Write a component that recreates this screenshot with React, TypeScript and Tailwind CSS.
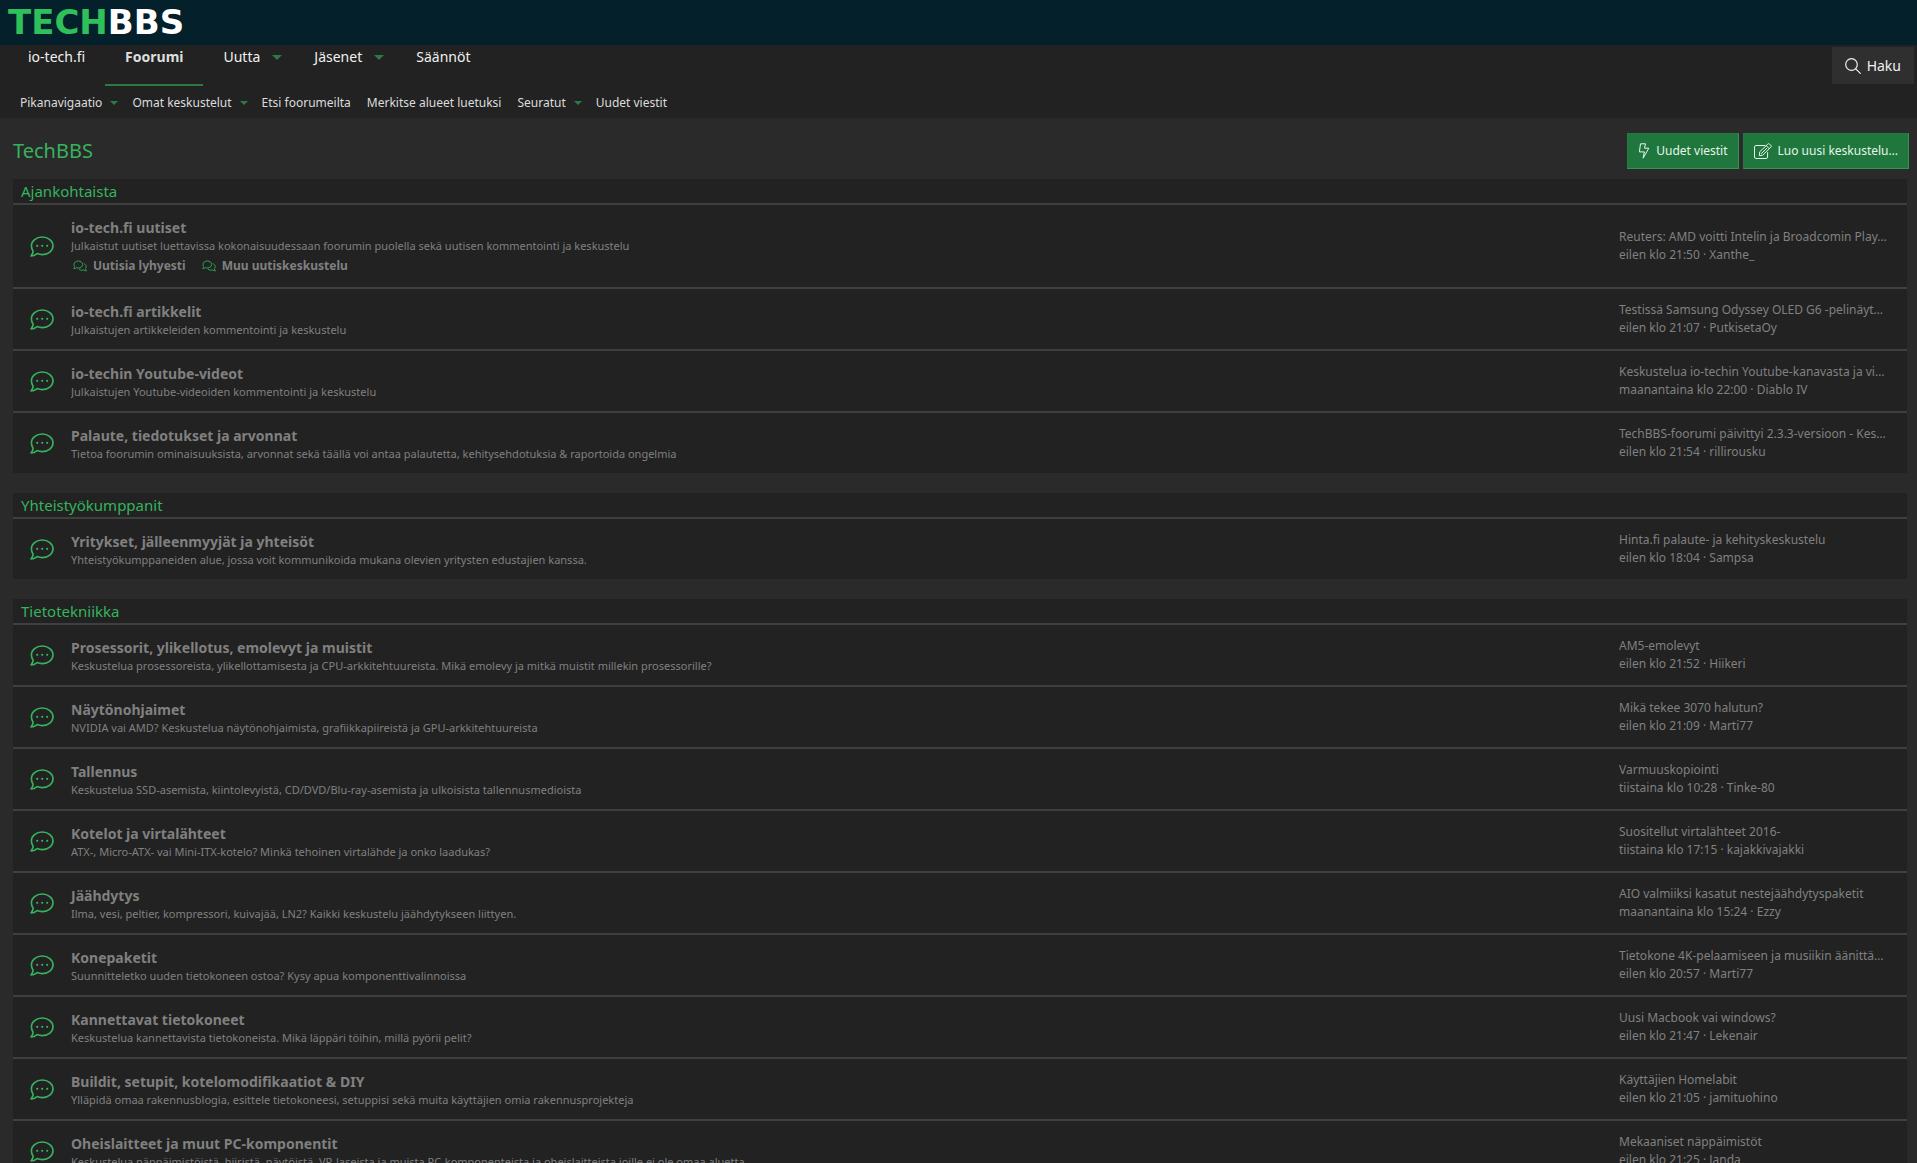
// ── Data ───────────────────────────────────────────────────────────────────

type Forum = {
  title: string;
  description: string;
  children?: string[];
  thread: string;
  time: string;
  user: string;
};

type Category = { title: string; forums: Forum[] };

const mainNav = [
  { label: "io-tech.fi" },
  { label: "Foorumi", active: true },
  { label: "Uutta", menu: true },
  { label: "Jäsenet", menu: true },
  { label: "Säännöt" },
];

const subNav = [
  { label: "Pikanavigaatio", menu: true },
  { label: "Omat keskustelut", menu: true },
  { label: "Etsi foorumeilta" },
  { label: "Merkitse alueet luetuksi" },
  { label: "Seuratut", menu: true },
  { label: "Uudet viestit" },
];

const categories: Category[] = [
  {
    title: "Ajankohtaista",
    forums: [
      {
        title: "io-tech.fi uutiset",
        description:
          "Julkaistut uutiset luettavissa kokonaisuudessaan foorumin puolella sekä uutisen kommentointi ja keskustelu",
        children: ["Uutisia lyhyesti", "Muu uutiskeskustelu"],
        thread: "Reuters: AMD voitti Intelin ja Broadcomin Play…",
        time: "eilen klo 21:50",
        user: "Xanthe_",
      },
      {
        title: "io-tech.fi artikkelit",
        description: "Julkaistujen artikkeleiden kommentointi ja keskustelu",
        thread: "Testissä Samsung Odyssey OLED G6 -pelinäyt…",
        time: "eilen klo 21:07",
        user: "PutkisetaOy",
      },
      {
        title: "io-techin Youtube-videot",
        description: "Julkaistujen Youtube-videoiden kommentointi ja keskustelu",
        thread: "Keskustelua io-techin Youtube-kanavasta ja vi…",
        time: "maanantaina klo 22:00",
        user: "Diablo IV",
      },
      {
        title: "Palaute, tiedotukset ja arvonnat",
        description:
          "Tietoa foorumin ominaisuuksista, arvonnat sekä täällä voi antaa palautetta, kehitysehdotuksia & raportoida ongelmia",
        thread: "TechBBS-foorumi päivittyi 2.3.3-versioon - Kes…",
        time: "eilen klo 21:54",
        user: "rillirousku",
      },
    ],
  },
  {
    title: "Yhteistyökumppanit",
    forums: [
      {
        title: "Yritykset, jälleenmyyjät ja yhteisöt",
        description:
          "Yhteistyökumppaneiden alue, jossa voit kommunikoida mukana olevien yritysten edustajien kanssa.",
        thread: "Hinta.fi palaute- ja kehityskeskustelu",
        time: "eilen klo 18:04",
        user: "Sampsa",
      },
    ],
  },
  {
    title: "Tietotekniikka",
    forums: [
      {
        title: "Prosessorit, ylikellotus, emolevyt ja muistit",
        description:
          "Keskustelua prosessoreista, ylikellottamisesta ja CPU-arkkitehtuureista. Mikä emolevy ja mitkä muistit millekin prosessorille?",
        thread: "AM5-emolevyt",
        time: "eilen klo 21:52",
        user: "Hiikeri",
      },
      {
        title: "Näytönohjaimet",
        description:
          "NVIDIA vai AMD? Keskustelua näytönohjaimista, grafiikkapiireistä ja GPU-arkkitehtuureista",
        thread: "Mikä tekee 3070 halutun?",
        time: "eilen klo 21:09",
        user: "Marti77",
      },
      {
        title: "Tallennus",
        description:
          "Keskustelua SSD-asemista, kiintolevyistä, CD/DVD/Blu-ray-asemista ja ulkoisista tallennusmedioista",
        thread: "Varmuuskopiointi",
        time: "tiistaina klo 10:28",
        user: "Tinke-80",
      },
      {
        title: "Kotelot ja virtalähteet",
        description:
          "ATX-, Micro-ATX- vai Mini-ITX-kotelo? Minkä tehoinen virtalähde ja onko laadukas?",
        thread: "Suositellut virtalähteet 2016-",
        time: "tiistaina klo 17:15",
        user: "kajakkivajakki",
      },
      {
        title: "Jäähdytys",
        description:
          "Ilma, vesi, peltier, kompressori, kuivajää, LN2? Kaikki keskustelu jäähdytykseen liittyen.",
        thread: "AIO valmiiksi kasatut nestejäähdytyspaketit",
        time: "maanantaina klo 15:24",
        user: "Ezzy",
      },
      {
        title: "Konepaketit",
        description:
          "Suunnitteletko uuden tietokoneen ostoa? Kysy apua komponenttivalinnoissa",
        thread: "Tietokone 4K-pelaamiseen ja musiikin äänittä…",
        time: "eilen klo 20:57",
        user: "Marti77",
      },
      {
        title: "Kannettavat tietokoneet",
        description:
          "Keskustelua kannettavista tietokoneista. Mikä läppäri töihin, millä pyörii pelit?",
        thread: "Uusi Macbook vai windows?",
        time: "eilen klo 21:47",
        user: "Lekenair",
      },
      {
        title: "Buildit, setupit, kotelomodifikaatiot & DIY",
        description:
          "Ylläpidä omaa rakennusblogia, esittele tietokoneesi, setuppisi sekä muita käyttäjien omia rakennusprojekteja",
        thread: "Käyttäjien Homelabit",
        time: "eilen klo 21:05",
        user: "jamituohino",
      },
      {
        title: "Oheislaitteet ja muut PC-komponentit",
        description:
          "Keskustelua näppäimistöistä, hiiristä, näytöistä, VR-laseista ja muista PC-komponenteista ja oheislaitteista joille ei ole omaa aluetta",
        thread: "Mekaaniset näppäimistöt",
        time: "eilen klo 21:25",
        user: "Janda",
      },
    ],
  },
];

// ── Icons ──────────────────────────────────────────────────────────────────

function ForumIcon() {
  return (
    <svg viewBox="0 0 24 21" className="h-[21px] w-6" fill="none" aria-hidden="true">
      <path
        d="M12.2 1C18.2 1 23 4.9 23 9.8s-4.8 8.8-10.8 8.8c-1.9 0-3.6-.4-5.1-1C5.5 18.9 3.4 20 1 20c1.2-1.3 2-2.9 2.2-4.6C2 13.8 1.4 11.9 1.4 9.8 1.4 4.9 6.2 1 12.2 1Z"
        stroke="#35b45d"
        strokeWidth="1.6"
        strokeLinejoin="round"
      />
      <g fill="#35b45d">
        <circle cx="7.2" cy="9.8" r="1.1" />
        <circle cx="12.2" cy="9.8" r="1.1" />
        <circle cx="17.2" cy="9.8" r="1.1" />
      </g>
    </svg>
  );
}

function CommentsIcon() {
  return (
    <svg
      viewBox="0 0 14 12"
      className="h-3 w-3.5"
      fill="none"
      stroke="#2fa354"
      strokeLinejoin="round"
      aria-hidden="true"
    >
      <path d="M5.3 1C7.7 1 9.6 2.5 9.6 4.5S7.7 8 5.3 8c-.6 0-1.2-.1-1.7-.3C2.8 8.2 1.9 8.6.7 8.6c.5-.6.9-1.3 1-2C1.2 6 1 5.3 1 4.5 1 2.5 2.900 1 5.300 1Z" />
      <path d="M10.9 3.7C12.3 4.2 13.2 5.3 13.2 6.7c0 .8-.3 1.5-.8 2 .1.8.5 1.500 1 2.200-1.100 0-2-.4-2.800-1-.5.2-1.100.3-1.700.3-1.500 0-2.800-.6-3.500-1.600" />
    </svg>
  );
}

function BoltIcon() {
  return (
    <svg
      viewBox="0 0 12 16"
      className="h-4 w-3"
      fill="none"
      stroke="currentColor"
      strokeLinejoin="round"
      aria-hidden="true"
    >
      <path d="M2.5.8h5L6.500 5.200h4.300L5.100 15.200l1.300-6.300H1.400Z" />
    </svg>
  );
}

function EditIcon() {
  return (
    <svg
      viewBox="0 0 18 16"
      className="h-4 w-[18px]"
      fill="none"
      stroke="currentColor"
      strokeLinejoin="round"
      strokeLinecap="round"
      aria-hidden="true"
    >
      <path d="M10.8 2.5H1.9c-.8 0-1.4.6-1.4 1.4v10.2c0 .8.6 1.400 1.400 1.400h10.300c.8 0 1.400-.6 1.400-1.400V9.600" />
      <path d="M14 .9c.4-.4 1-.4 1.400 0l1.600 1.600c.4.4.4 1 0 1.400l-8.300 8.300-3.400.5.400-3.500ZM12.300 2.700l3 3M7.400 10.600l5.200-5.200" />
    </svg>
  );
}

function SearchIcon() {
  return (
    <svg
      viewBox="0 0 16 16"
      className="size-4"
      fill="none"
      stroke="currentColor"
      strokeWidth="1.2"
      strokeLinecap="round"
      aria-hidden="true"
    >
      <circle cx="6.5" cy="6.5" r="5.8" />
      <path d="m10.8 10.8 4.5 4.5" />
    </svg>
  );
}

function Caret({ className }: { className: string }) {
  return (
    <svg viewBox="0 0 10 5" className={className} fill="#2b7a46" aria-hidden="true">
      <path d="M0 0h10L5 5Z" />
    </svg>
  );
}

// ── Page parts ─────────────────────────────────────────────────────────────

function MainNav() {
  return (
    <div className="flex items-start justify-between bg-[#222222] pr-[3px]">
      <nav aria-label="Päävalikko" className="flex pl-2">
        {mainNav.map((item) => (
          <div
            key={item.label}
            className={
              item.active
                ? "flex h-[41px] items-start border-b-2 border-[#2b7a46] px-5"
                : "flex h-[41px] items-start px-5"
            }
          >
            <a
              href="#"
              className={
                item.active
                  ? "text-sm leading-6 font-bold text-[#dedede]"
                  : "text-sm leading-6 text-[#f0f0f0]"
              }
            >
              {item.label}
            </a>
            {item.menu && (
              <button
                type="button"
                aria-label={`${item.label} valikko`}
                className="-mr-2 ml-3 flex h-6 items-center"
              >
                <Caret className="h-[5px] w-[10px]" />
              </button>
            )}
          </div>
        ))}
      </nav>
      <button
        type="button"
        className="mt-0.5 flex h-[37px] items-center gap-1.5 bg-[#2f2f2f] px-[13px] text-sm text-[#f0f0f0]"
      >
        <SearchIcon />
        Haku
      </button>
    </div>
  );
}

function SubNav() {
  return (
    <nav aria-label="Alavalikko" className="flex h-8 gap-4 bg-[#222222] pt-0.5 pl-5 text-xs">
      {subNav.map((item) => (
        <div key={item.label} className="flex items-center gap-2">
          <a href="#" className="text-[#dcdcdc]">
            {item.label}
          </a>
          {item.menu && (
            <button type="button" aria-label={`${item.label} valikko`} className="-mr-0.5 flex">
              <Caret className="h-1 w-2" />
            </button>
          )}
        </div>
      ))}
    </nav>
  );
}

function ForumRow({ forum }: { forum: Forum }) {
  return (
    <div className="flex items-center border-t-2 border-[#3f3f3f] pr-3">
      <div className="flex w-[58px] shrink-0 pl-[17px]">
        <ForumIcon />
      </div>
      <div className="min-w-0 flex-1 py-3">
        <h3 className="text-sm leading-[21px] font-bold">
          <a href="#">{forum.title}</a>
        </h3>
        <p className="truncate text-[11px] leading-[15px]">{forum.description}</p>
        {forum.children && (
          <div className="mt-1 flex gap-4 pl-0.5 text-xs leading-[18px] font-bold">
            {forum.children.map((child) => (
              <a key={child} href="#" className="flex items-center gap-1.5">
                <CommentsIcon />
                {child}
              </a>
            ))}
          </div>
        )}
      </div>
      <div className="w-[276px] shrink-0 text-xs leading-[18px]">
        <a href="#" className="block truncate">
          {forum.thread}
        </a>
        <div>
          <time>{forum.time}</time> · <a href="#">{forum.user}</a>
        </div>
      </div>
    </div>
  );
}

export default function App() {
  return (
    <div className="h-screen overflow-hidden bg-[#2a2a2a] font-['Noto_Sans','Open_Sans',sans-serif] text-[#808080]">
      <header className="flex h-[45px] items-center bg-[#04202b] px-2">
        <a
          href="#"
          className="font-['DejaVu_Sans',sans-serif] text-[34px] leading-[45px] font-bold text-[#2fbf5b]"
        >
          TECH<span className="text-white">BBS</span>
        </a>
      </header>
      <MainNav />
      <SubNav />

      <main>
        <div className="flex items-center justify-between pt-[15px] pr-2 pb-2.5 pl-[13px]">
          <h1 className="text-xl text-[#35b45d]">TechBBS</h1>
          <div className="flex gap-1 text-xs text-[#e6f5ea]">
            <button
              type="button"
              className="flex h-9 items-center gap-1.5 border border-[#237a42] border-r-[#3a9157] border-b-[#3a9157] bg-[#1f773e] px-2.5"
            >
              <BoltIcon />
              Uudet viestit
            </button>
            <button
              type="button"
              className="flex h-9 items-center gap-1.5 border border-[#237a42] border-r-[#3a9157] border-b-[#3a9157] bg-[#1f773e] px-2.5"
            >
              <EditIcon />
              Luo uusi keskustelu…
            </button>
          </div>
        </div>

        <div className="space-y-5 pr-2.5 pl-[13px]">
          {categories.map((category) => (
            <section key={category.title} className="bg-[#222222]">
              <h2 className="px-2 text-[15px] leading-6 text-[#35b45d]">
                <a href="#">{category.title}</a>
              </h2>
              {category.forums.map((forum) => (
                <ForumRow key={forum.title} forum={forum} />
              ))}
            </section>
          ))}
        </div>
      </main>
    </div>
  );
}
